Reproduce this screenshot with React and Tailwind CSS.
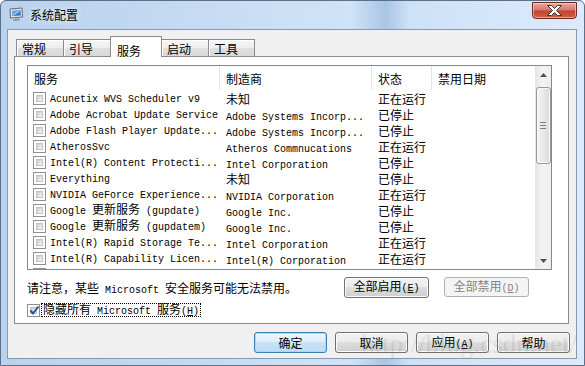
import React from 'react';

const CJK = /([\u2e80-\u9fff\u3000-\u303f\uff00-\uffef]+)/;
const cjk = "font-['Noto_Sans_CJK_SC',sans-serif] text-[12px] leading-[16px]";
const mono = "font-['Liberation_Mono','Courier_New',monospace] text-[10px] leading-[16px] whitespace-pre";

// mixed text: CJK runs like SimSun 12px, latin runs as 6px-wide mono
function T({ s, children }) {
  return (
    <span className="leading-[16px] whitespace-nowrap">
      {s.split(CJK).map((p, i) =>
        !p ? null : <span key={i} className={i % 2 ? cjk : mono}>{p}</span>
      )}
      {children}
    </span>
  );
}

function Key({ k }) {
  return (
    <span className={mono}>
      (<span className="underline">{k}</span>)
    </span>
  );
}

const services = [
  ['Acunetix WVS Scheduler v9', '未知', '正在运行'],
  ['Adobe Acrobat Update Service', 'Adobe Systems Incorp...', '已停止'],
  ['Adobe Flash Player Update...', 'Adobe Systems Incorp...', '已停止'],
  ['AtherosSvc', 'Atheros Commnucations', '正在运行'],
  ['Intel(R) Content Protecti...', 'Intel Corporation', '已停止'],
  ['Everything', '未知', '已停止'],
  ['NVIDIA GeForce Experience...', 'NVIDIA Corporation', '正在运行'],
  ['Google 更新服务 (gupdate)', 'Google Inc.', '已停止'],
  ['Google 更新服务 (gupdatem)', 'Google Inc.', '已停止'],
  ['Intel(R) Rapid Storage Te...', 'Intel Corporation', '正在运行'],
  ['Intel(R) Capability Licen...', 'Intel(R) Corporation', '正在运行'],
  ['Intel(R) Management and S...', 'Intel Corporation', '正在运行'],
];

const tabs = [
  { label: '常规', w: 'w-[48px]' },
  { label: '引导', w: 'w-[48px]' },
  { label: '服务', w: 'w-[52px]', active: true },
  { label: '启动', w: 'w-[48px]' },
  { label: '工具', w: 'w-[47px]' },
];

function Check({ checked }) {
  return (
    <span className="flex-none w-[13px] h-[13px] border border-[#8e8f8f] bg-white p-[2px] flex">
      <span className="relative flex-1 border border-[#bfc3c8] bg-[linear-gradient(135deg,#c9cdd3,#f5f5f5)]">
        {checked && (
          <svg className="absolute -left-[2px] -top-[3px]" width="11" height="11" viewBox="0 0 11 11">
            <path d="M1.5 5.5 L4 8.5 L9.5 1.5" fill="none" stroke="#2c4f9e" strokeWidth="2" />
          </svg>
        )}
      </span>
    </span>
  );
}

const btn =
  'h-[21px] rounded-[3px] border border-[#707070] bg-[linear-gradient(#f2f2f2,#ebebeb_50%,#dddddd_50%,#cfcfcf)] shadow-[inset_0_0_0_1px_#fbfbfb] flex items-center justify-center text-black';

export default function App() {
  return (
    <div className="w-[585px] h-[366px] bg-white overflow-hidden">
      <div className="relative w-[585px] h-[366px] flex flex-col rounded-t-[6px] border border-[#5d6f84] bg-[linear-gradient(90deg,#b9d2ee_0%,#c6dbf3_35%,#d0e3f8_60%,#a9c5e4_66%,#cde1f7_70%,#dcebfb_100%)]">
        {/* title bar */}
        <div className="h-[28px] flex items-start">
          <svg className="mt-[6px] ml-[8px]" width="15" height="15" viewBox="0 0 15 15">
            <defs>
              <linearGradient id="scr" x1="0" y1="0" x2="1" y2="1">
                <stop offset="0" stopColor="#7fc0f2" />
                <stop offset="1" stopColor="#1d5fb8" />
              </linearGradient>
            </defs>
            <path d="M1 2 L13 1 L13.5 10 L1.5 11 Z" fill="#dfe4ea" stroke="#5f6b79" />
            <path d="M3 3.5 L11.5 3 L11.8 8.5 L3.3 9 Z" fill="url(#scr)" />
            <path d="M4 8 L10 4" stroke="#ffffff" strokeOpacity="0.7" />
            <path d="M5 12 L10 11.6 L11 13.5 L4 14 Z" fill="#8d97a3" />
          </svg>
          <span className={cjk + ' ml-[6px] mt-[6px] text-black [text-shadow:0_0_6px_#ffffff]'}>系统配置</span>
          <div className="ml-auto mr-[7px] mt-[1px] w-[45px] h-[17px] rounded-b-[4px] border border-[#6b2a25] bg-[linear-gradient(#e9a99f,#d8786c_45%,#c34232_55%,#d0633f)] shadow-[inset_0_0_0_1px_rgba(255,220,210,0.55)] flex items-center justify-center">
            <svg width="15" height="11" viewBox="0 0 15 11">
              <path d="M0.5 0.5 H4.5 L7.5 3.5 L10.5 0.5 H14.5 L9.5 5.5 L14.5 10.5 H10.5 L7.5 7.5 L4.5 10.5 H0.5 L5.5 5.5 Z" fill="#ffffff" stroke="#4a3434" strokeWidth="1" />
            </svg>
          </div>
        </div>

        {/* client area */}
        <div className="ml-[6px] w-[570px] h-[330px] border border-[#8599b2] bg-[#f0f0f0] flex flex-col pl-[6px] pt-[6px]">
          {/* tabs */}
          <div className="flex items-end h-[20px] ml-[2px]">
            {tabs.map((t, i) =>
              t.active ? (
                <div key={t.label} className={`${t.w} h-[21px] -mb-px -ml-px relative z-10 bg-white border border-b-0 border-[#898c95] pl-[6px] pt-[1px] text-black`}>
                  <T s={t.label} />
                </div>
              ) : (
                <div
                  key={t.label}
                  className={`${t.w} h-[17px] ${i > 0 ? '-ml-px' : ''} border border-b-0 border-[#898c95] bg-[linear-gradient(#f6f6f6,#ededed_50%,#e0e0e0_50%,#d8d8d8)] shadow-[inset_1px_1px_0_#ffffff] pl-[5px] flex items-center text-black`}
                >
                  <T s={t.label} />
                </div>
              )
            )}
          </div>

          {/* tab page */}
          <div className="w-[555px] h-[268px] border border-[#898c95] bg-white flex flex-col pl-[12px] pt-[8px]">
            {/* list view */}
            <div className="w-[525px] h-[205px] border border-[#828790] bg-white flex">
              <div className="w-[507px] flex flex-col overflow-hidden text-black">
                <div className="h-[24px] flex flex-none">
                  <div className="w-[191px] pl-[6px] flex items-center"><T s="服务" /></div>
                  <div className="w-[152px] pl-[6px] border-l border-[#e2e5e9] flex items-center"><T s="制造商" /></div>
                  <div className="w-[60px] pl-[6px] border-l border-[#e2e5e9] flex items-center"><T s="状态" /></div>
                  <div className="flex-1 pl-[6px] border-l border-[#e2e5e9] flex items-center"><T s="禁用日期" /></div>
                </div>
                <div className="flex flex-col">
                  {services.map(([name, maker, state]) => (
                    <div key={name} className="h-[16px] flex-none flex items-center whitespace-nowrap">
                      <div className="w-[191px] pl-[5px] flex items-center gap-[4px] overflow-hidden">
                        <Check />
                        <T s={name} />
                      </div>
                      <div className="w-[152px] pl-[7px] overflow-hidden"><T s={maker} /></div>
                      <div className="w-[60px] pl-[7px]"><T s={state} /></div>
                    </div>
                  ))}
                </div>
              </div>

              {/* scrollbar */}
              <div className="w-[16px] flex flex-col items-center bg-[linear-gradient(90deg,#e4e4e4,#f3f3f3_45%,#eeeeee)]">
                <div className="h-[17px] flex items-center justify-center">
                  <svg width="7" height="4" viewBox="0 0 7 4"><path d="M0 4 L3.5 0 L7 4 Z" fill="#4f4f4f" /></svg>
                </div>
                <div className="mt-[4px] w-[15px] h-[77px] rounded-[3px] border border-[#979797] bg-[linear-gradient(90deg,#f4f4f4,#e9e9e9_50%,#d9d9d9)] shadow-[inset_0_0_0_1px_#fbfbfb] flex items-center justify-center">
                  <svg width="6" height="7" viewBox="0 0 6 7">
                    <path d="M0 0.5 H6 M0 3.5 H6 M0 6.5 H6" stroke="#7d7d7d" strokeWidth="1" />
                  </svg>
                </div>
                <div className="flex-1" />
                <div className="h-[17px] flex items-center justify-center">
                  <svg width="7" height="4" viewBox="0 0 7 4"><path d="M0 0 L7 0 L3.5 4 Z" fill="#4f4f4f" /></svg>
                </div>
              </div>
            </div>

            {/* note + enable/disable */}
            <div className="mt-[7px] w-[525px] h-[20px] flex items-center text-black">
              <div className="flex-1"><T s="请注意，某些 Microsoft 安全服务可能无法禁用。" /></div>
              <div className={btn + ' w-[85px] h-[20px]'}>
                <T s="全部启用"><Key k="E" /></T>
              </div>
              <div className="ml-[15px] mr-[23px] w-[85px] h-[20px] rounded-[3px] border border-[#adb2b5] bg-[#f4f4f4] flex items-center justify-center text-[#838383]">
                <T s="全部禁用"><Key k="D" /></T>
              </div>
            </div>

            {/* hide ms services */}
            <div className="mt-[6px] h-[14px] flex items-center text-black">
              <Check checked />
              <div className="ml-[1px] h-[14px] pl-[1px] pr-[1px] border border-dotted border-black flex items-center">
                <T s="隐藏所有 Microsoft 服务"><Key k="H" /></T>
              </div>
            </div>
          </div>

          {/* dialog buttons */}
          <div className="mt-[8px] flex justify-end gap-[8px] pr-[6px]">
            <div className="w-[73px] h-[21px] rounded-[3px] border border-[#3c7fb1] bg-[linear-gradient(#eef7fd,#dcedfb_50%,#c7e3f8_50%,#b9dcf5)] shadow-[inset_0_0_0_1px_#a6dbf8] flex items-center justify-center text-black">
              <T s="确定" />
            </div>
            <div className={btn + ' w-[73px]'}><T s="取消" /></div>
            <div className={btn + ' w-[73px]'}><T s="应用"><Key k="A" /></T></div>
            <div className={btn + ' w-[73px]'}><T s="帮助" /></div>
          </div>
        </div>

        {/* blog watermark over the bottom buttons */}
        <span className="absolute left-[360px] top-[330px] pointer-events-none font-['Liberation_Serif',serif] text-[27px] leading-none text-[rgba(120,120,120,0.17)] whitespace-nowrap">
          http://blog.csdn.net/
        </span>
      </div>
    </div>
  );
}
